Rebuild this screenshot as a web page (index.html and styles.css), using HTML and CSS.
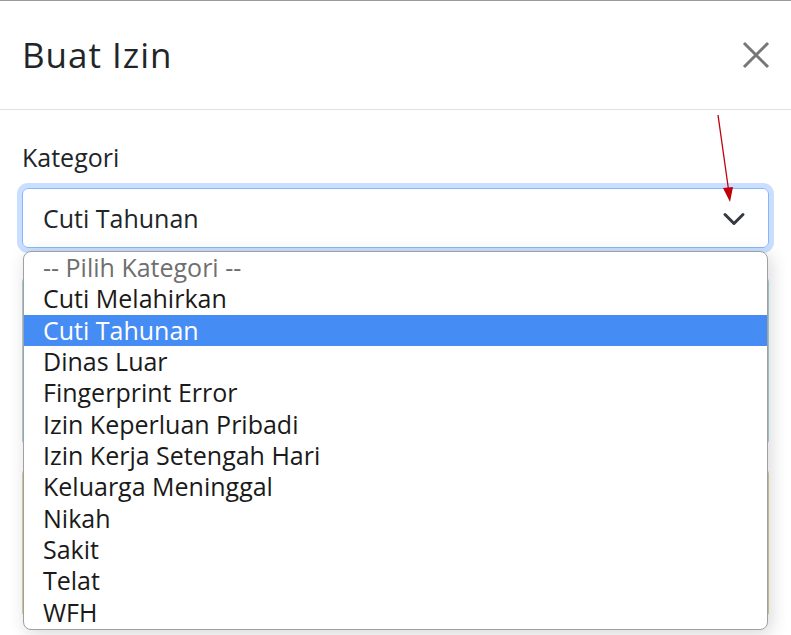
FILE: index.html
```html
<!DOCTYPE html>
<html lang="id">
<head>
<meta charset="utf-8">
<title>Buat Izin</title>
<link rel="stylesheet" href="styles.css">
</head>
<body>
<div class="modal">
  <div class="modal-header">
    <h5 class="modal-title">Buat Izin</h5>
    <button class="btn-close" type="button" aria-label="Close">
      <svg width="28" height="28" viewBox="0 0 28 28"><path d="M2 2 L26 26 M26 2 L2 26" stroke="#777" stroke-width="3" fill="none"/></svg>
    </button>
  </div>
  <div class="modal-body">
    <label class="form-label">Kategori</label>
    <div class="form-select">
      <span>Cuti Tahunan</span>
      <svg class="chev" width="24" height="18" viewBox="0 0 16 12"><path d="m2 3 6 6 6-6" stroke="#343a40" stroke-width="2" stroke-linecap="round" stroke-linejoin="round" fill="none"/></svg>
    </div>
    <div class="behind">
      <div class="box blue"></div>
      <div class="box tan"></div>
    </div>
  </div>
  <ul class="dropdown">
    <li class="placeholder">-- Pilih Kategori --</li>
    <li>Cuti Melahirkan</li>
    <li class="selected">Cuti Tahunan</li>
    <li>Dinas Luar</li>
    <li>Fingerprint Error</li>
    <li>Izin Keperluan Pribadi</li>
    <li>Izin Kerja Setengah Hari</li>
    <li>Keluarga Meninggal</li>
    <li>Nikah</li>
    <li>Sakit</li>
    <li>Telat</li>
    <li>WFH</li>
  </ul>
  <svg class="annot" width="30" height="100" viewBox="0 0 30 100"><line x1="9" y1="0" x2="20" y2="78" stroke="#c0000a" stroke-width="1.3"/><polygon points="14,73 24,72 21,87" fill="#c0000a"/></svg>
</div>
</body>
</html>
```
FILE: styles.css
```css
* { box-sizing: border-box; }
html, body { margin: 0; padding: 0; background: #fff; }
body {
  width: 791px;
  height: 635px;
  overflow: hidden;
  font-family: "Open Sans", "Lato", sans-serif;
  color: #212529;
}
.modal {
  position: relative;
  border-top: 1px solid #9a9a9a;
  height: 635px;
}
.modal-header {
  display: flex;
  align-items: center;
  justify-content: space-between;
  height: 109px;
  padding: 0 21px 0 22px;
  border-bottom: 1.5px solid #dee2e6;
}
.modal-title {
  margin: 0;
  font-size: 35px;
  letter-spacing: 1px;
  font-weight: 400;
  line-height: 1.2;
}
.btn-close {
  border: 0;
  background: none;
  padding: 0;
  display: flex;
  width: 28px;
  height: 28px;
}
.modal-body {
  padding: 31px 22px 0 22px;
}
.form-label {
  display: block;
  font-size: 25px;
  line-height: 32px;
  margin-bottom: 15px;
}
.form-select {
  display: flex;
  align-items: center;
  justify-content: space-between;
  height: 60px;
  padding: 0 22px 0 20px;
  border: 1.5px solid #86b7fe;
  border-radius: 6px;
  box-shadow: 0 0 0 5px rgba(13, 110, 253, 0.22);
  font-size: 25px;
}
.chev { display: block; margin-top: 2px; }
.behind {
  margin-top: 28px;
  display: flex;
  flex-direction: column;
  gap: 22px;
}
.box { border-radius: 6px; background: #fff; }
.box.blue { height: 170px; border: 1.5px solid #a8d2de; }
.box.tan { height: 150px; border: 1.5px solid #dccb9b; }
.dropdown {
  position: absolute;
  left: 23px;
  top: 250px;
  width: 745px;
  height: 379px;
  margin: 0;
  padding: 0;
  list-style: none;
  background: #fff;
  border: 1px solid #a0a0a0;
  border-radius: 8px;
  box-shadow: 3px 4px 18px rgba(0, 0, 0, 0.16);
  overflow: hidden;
}
.dropdown li {
  height: 31.33px;
  line-height: 30px;
  padding-left: 19px;
  font-size: 25px;
  color: #1a1a1a;
}
.dropdown li.placeholder { color: #6f6f6f; }
.dropdown li.selected { background: #468cf5; color: #fff; }
.annot {
  position: absolute;
  left: 709px;
  top: 114px;
}
```
